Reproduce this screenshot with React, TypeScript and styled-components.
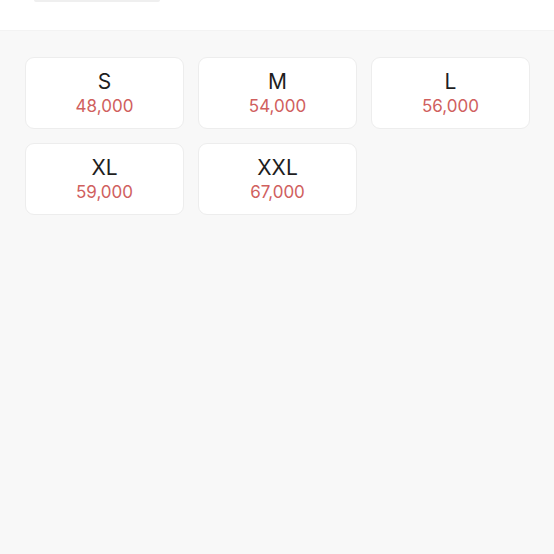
import styled, { createGlobalStyle } from 'styled-components'

const GlobalStyle = createGlobalStyle`
  html, body {
    margin: 0;
    padding: 0;
    background: #f8f8f8;
    font-family: Inter, "Noto Sans", "Liberation Sans", sans-serif;
  }
`

const Page = styled.div`
  min-height: 554px;
  display: flex;
  flex-direction: column;
  background: #f8f8f8;
`

const Header = styled.div`
  height: 30px;
  background: #ffffff;
  box-shadow: 0 1px 1px rgba(0, 0, 0, 0.02);
  padding-left: 34px;
`

const HeaderTab = styled.div`
  width: 126px;
  height: 2px;
  background: #efefef;
  border-radius: 0 0 2px 2px;
`

const OptionGrid = styled.div`
  display: grid;
  grid-template-columns: repeat(3, 1fr);
  column-gap: 14px;
  row-gap: 14px;
  padding: 27px 24px 0 25px;
`

const OptionCard = styled.button`
  display: flex;
  flex-direction: column;
  align-items: center;
  gap: 1px;
  padding: 11px 0 11px;
  background: #ffffff;
  border: 1px solid #ededed;
  border-radius: 9px;
  font-family: inherit;
  cursor: pointer;
`

const SizeLabel = styled.span`
  font-size: 21px;
  line-height: 25px;
  color: #1e1e1e;
`

const Price = styled.span`
  font-size: 17px;
  line-height: 22px;
  color: #d0605e;
`

const options = [
  { size: 'S', price: 48000 },
  { size: 'M', price: 54000 },
  { size: 'L', price: 56000 },
  { size: 'XL', price: 59000 },
  { size: 'XXL', price: 67000 },
]

export default function App() {
  return (
    <>
      <GlobalStyle />
      <Page>
        <Header>
          <HeaderTab />
        </Header>
        <OptionGrid>
          {options.map((o) => (
            <OptionCard key={o.size}>
              <SizeLabel>{o.size}</SizeLabel>
              <Price>{o.price.toLocaleString('en-US')}</Price>
            </OptionCard>
          ))}
        </OptionGrid>
      </Page>
    </>
  )
}
